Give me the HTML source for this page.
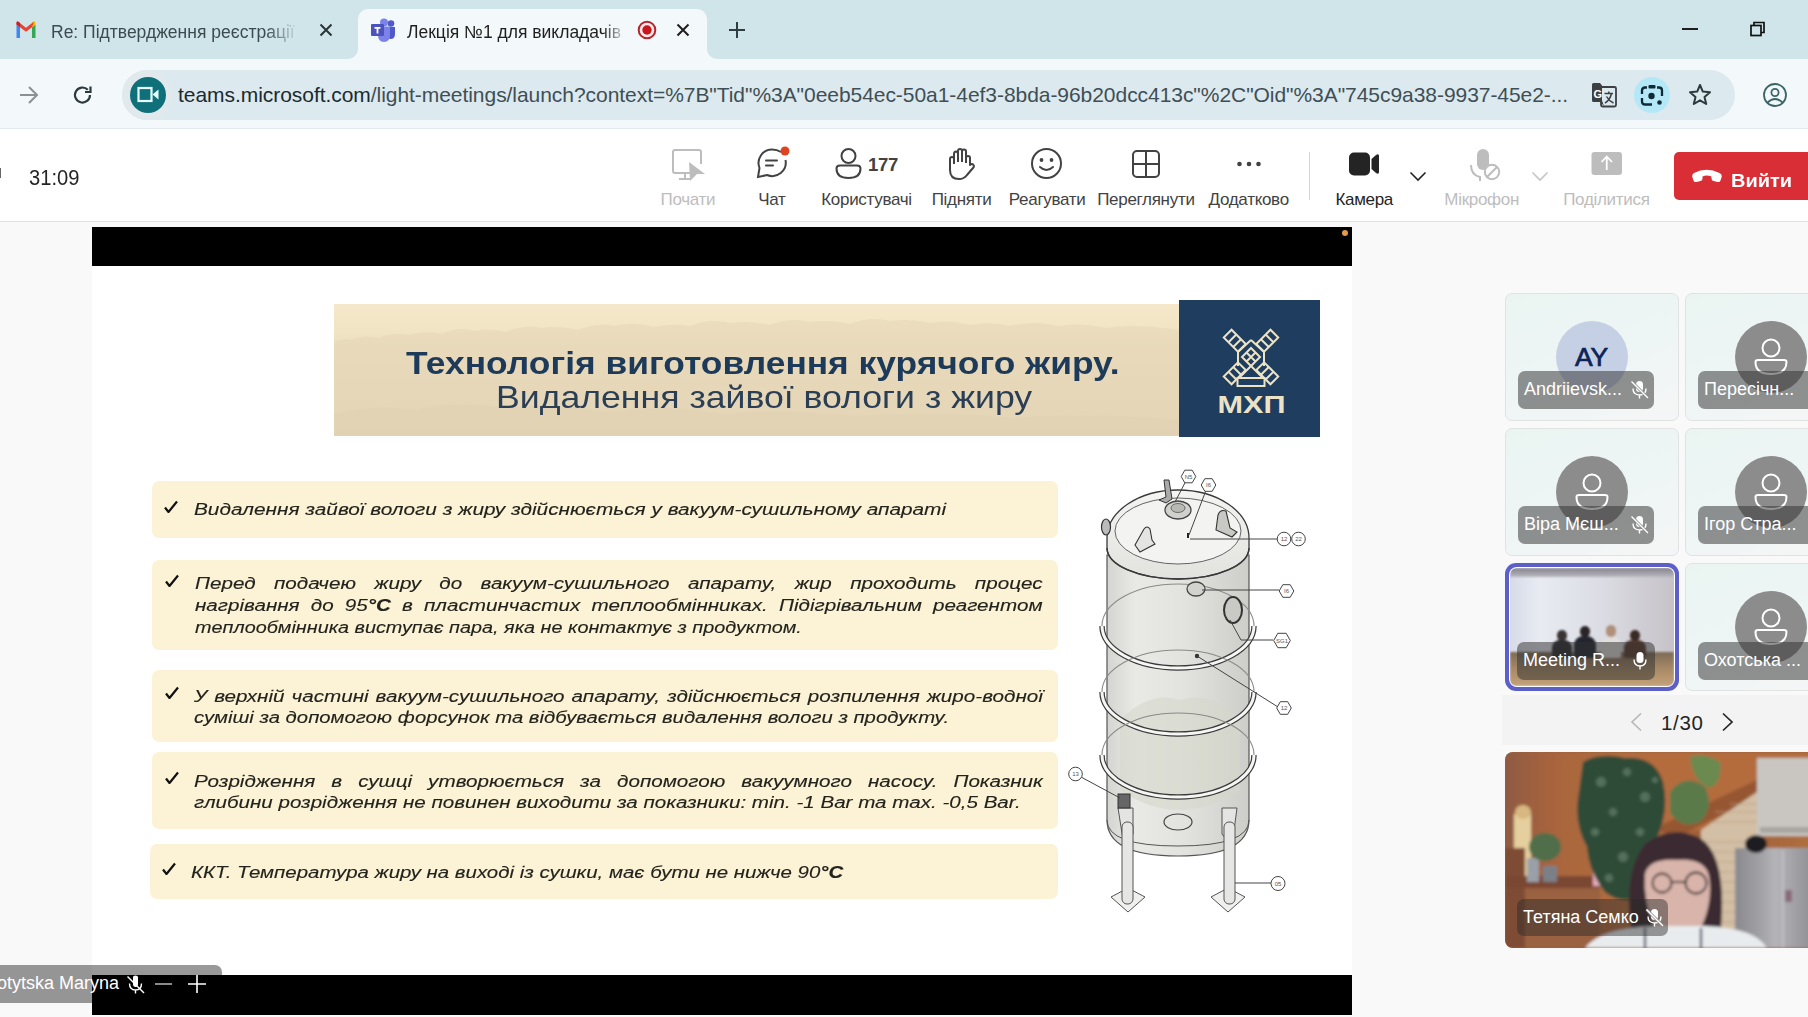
<!DOCTYPE html>
<html><head><meta charset="utf-8">
<style>
*{margin:0;padding:0;box-sizing:border-box}
html,body{width:1808px;height:1017px;overflow:hidden;background:#f9f9f9;font-family:"Liberation Sans",sans-serif}
.a{position:absolute}
.nw{white-space:nowrap}
</style></head><body>
<!-- ========== TAB STRIP ========== -->
<div class="a" style="left:0;top:0;width:1808px;height:59px;background:#d0e5ea"></div>
<!-- gmail icon -->
<svg class="a" style="left:15px;top:21px" width="22" height="17" viewBox="0 0 22 17">
  <path d="M1.5 17 V3.5 L5 6.2 V17 Z" fill="#4285f4"/>
  <path d="M17 17 V6.2 L20.5 3.5 V17 Z" fill="#34a853"/>
  <path d="M17 6.2 L17 1.5 L19 0.6 Q20.5 0 20.5 2 V3.5 Z" fill="#fbbc04"/>
  <path d="M1.5 3.5 V2 Q1.5 0 3 0.6 L11 6.8 L19 0.6 L17 6.2 L11 10.8 L5 6.2 Z" fill="#ea4335"/>
  <path d="M1.5 3.5 V2 Q1.5 0 3 0.6 L5 2.1 V6.2 Z" fill="#c5221f"/>
</svg>
<div class="a nw" style="left:51px;top:22px;width:250px;overflow:hidden;font-size:17.5px;color:#3b4b50;-webkit-mask-image:linear-gradient(90deg,#000 215px,transparent 248px)">Re: Підтвердження реєстрації</div>
<svg class="a" style="left:319px;top:23px" width="14" height="14" viewBox="0 0 14 14"><path d="M1.5 1.5 L12.5 12.5 M12.5 1.5 L1.5 12.5" stroke="#2a3438" stroke-width="2"/></svg>
<!-- active tab -->
<div class="a" style="left:358px;top:9px;width:349px;height:51px;background:#f3f8fb;border-radius:10px 10px 0 0"></div>
<div class="a" style="left:348px;top:49px;width:10px;height:10px;background:#f3f8fb"></div>
<div class="a" style="left:338px;top:39px;width:20px;height:20px;background:#d0e5ea;border-radius:0 0 10px 0"></div>
<div class="a" style="left:707px;top:49px;width:10px;height:10px;background:#f3f8fb"></div>
<div class="a" style="left:707px;top:39px;width:20px;height:20px;background:#d0e5ea;border-radius:0 0 0 10px"></div>
<!-- teams icon -->
<svg class="a" style="left:370px;top:18px" width="26" height="24" viewBox="0 0 26 24">
  <circle cx="21" cy="5.5" r="3.3" fill="#5059c9"/>
  <path d="M17 9 H25 V16 Q25 21 20.5 21 Q17 21 17 17 Z" fill="#5059c9"/>
  <circle cx="14" cy="4.5" r="4" fill="#7b83eb"/>
  <path d="M8 8.5 H20 V17 Q20 24 14 24 Q8 24 8 17 Z" fill="#7b83eb"/>
  <rect x="1" y="6" width="13" height="12" rx="1" fill="#4b53bc"/>
  <path d="M4.5 9 H10.5 V10.8 H8.4 V15.5 H6.6 V10.8 H4.5 Z" fill="#fff"/>
</svg>
<div class="a nw" style="left:407px;top:22px;width:220px;overflow:hidden;font-size:17.5px;color:#1f1f1f;-webkit-mask-image:linear-gradient(90deg,#000 196px,transparent 220px)">Лекція №1 для викладачів</div>
<svg class="a" style="left:637px;top:20px" width="20" height="20" viewBox="0 0 20 20"><circle cx="10" cy="10" r="8.3" fill="#fde9e9" stroke="#b3262d" stroke-width="2"/><circle cx="10" cy="10" r="4.7" fill="#c8161d"/></svg>
<svg class="a" style="left:676px;top:23px" width="14" height="14" viewBox="0 0 14 14"><path d="M1.5 1.5 L12.5 12.5 M12.5 1.5 L1.5 12.5" stroke="#1f1f1f" stroke-width="2"/></svg>
<!-- plus -->
<svg class="a" style="left:729px;top:22px" width="16" height="16" viewBox="0 0 16 16"><path d="M8 0 V16 M0 8 H16" stroke="#2f3d42" stroke-width="2"/></svg>
<!-- window controls -->
<div class="a" style="left:1682px;top:28px;width:16px;height:1.5px;background:#1f1f1f"></div>
<svg class="a" style="left:1750px;top:21px" width="16" height="16" viewBox="0 0 16 16"><rect x="1" y="4.5" width="10" height="10" fill="none" stroke="#111" stroke-width="1.7"/><path d="M4 4.5 V1.5 H14 V11.5 H11" fill="none" stroke="#111" stroke-width="1.7"/></svg>

<!-- ========== BROWSER TOOLBAR ========== -->
<div class="a" style="left:0;top:59px;width:1808px;height:70px;background:#f3f8fb"></div>
<div class="a" style="left:0;top:128px;width:1808px;height:1px;background:#e2e9ec"></div>
<svg class="a" style="left:18px;top:85px" width="22" height="20" viewBox="0 0 22 20"><path d="M2 10 H19 M11 2 L19 10 L11 18" fill="none" stroke="#8a9194" stroke-width="2"/></svg>
<svg class="a" style="left:72px;top:84px" width="22" height="22" viewBox="0 0 22 22"><path d="M18 11 A7.5 7.5 0 1 1 15.8 5.7" fill="none" stroke="#2c3a3e" stroke-width="2.2"/><path d="M18.5 2.5 V8 H13" fill="none" stroke="#2c3a3e" stroke-width="2.2"/></svg>
<!-- omnibox -->
<div class="a" style="left:122px;top:70px;width:1613px;height:50px;border-radius:25px;background:#dce9ee"></div>
<div class="a" style="left:122px;top:70px;width:50px;height:50px;border-radius:25px;background:#e1e9ec"></div>
<div class="a" style="left:130px;top:77px;width:36px;height:36px;border-radius:18px;background:#10707a"></div>
<svg class="a" style="left:137px;top:85px" width="24" height="20" viewBox="0 0 24 20"><rect x="1.5" y="3" width="13" height="13" fill="none" stroke="#e6fbff" stroke-width="2.2"/><path d="M15.5 9.5 L21.5 4.5 V14.5 Z" fill="#e6fbff"/></svg>
<div class="a nw" style="left:178px;top:83px;font-size:21px;letter-spacing:-0.05px;color:#1b2a30">teams.microsoft.com<span style="color:#3f4f55">/light-meetings/launch?context=%7B"Tid"%3A"0eeb54ec-50a1-4ef3-8bda-96b20dcc413c"%2C"Oid"%3A"745c9a38-9937-45e2-...</span></div>
<!-- translate icon -->
<svg class="a" style="left:1590px;top:81px" width="30" height="28" viewBox="0 0 30 28">
  <rect x="11" y="6" width="15" height="19.5" rx="1.5" fill="#dce9ee" stroke="#3c4043" stroke-width="1.8"/>
  <path d="M3.5 2 H10 L12 4.5 V19.5 L14 25 L10 21 H3.5 Q2 21 2 19.5 V3.5 Q2 2 3.5 2 Z" fill="#3c4043"/>
  <text x="3.6" y="16.5" font-size="11" font-weight="700" font-family="Liberation Sans" fill="#fff">G</text>
  <path d="M14.5 12.5 H23 M18.8 10.5 V12.5 M21.5 12.5 Q20 19 15 22 M16.5 15.5 Q19 20 23.5 22" fill="none" stroke="#3c4043" stroke-width="1.5"/>
</svg>
<!-- lens -->
<div class="a" style="left:1634px;top:77px;width:36px;height:36px;border-radius:18px;background:#b5e8f7"></div>
<svg class="a" style="left:1640px;top:83px" width="24" height="24" viewBox="0 0 24 24">
  <path d="M7 4.5 H5 Q2 4.5 2 7.5 V11 M2 15 V18.5 Q2 21.5 5 21.5 H12 M22 13 V7.5 Q22 4.5 19 4.5 H17" fill="none" stroke="#0f2a35" stroke-width="2.3"/>
  <rect x="8.5" y="2" width="7" height="3.5" rx="1" fill="#0f2a35"/>
  <circle cx="11.5" cy="13" r="3.2" fill="#0f2a35"/>
  <circle cx="19.5" cy="19.5" r="2.3" fill="#0f2a35"/>
</svg>
<!-- star -->
<svg class="a" style="left:1688px;top:83px" width="24" height="23" viewBox="0 0 24 23"><path d="M12 2 L14.8 8.6 L22 9.2 L16.5 13.9 L18.2 21 L12 17.3 L5.8 21 L7.5 13.9 L2 9.2 L9.2 8.6 Z" fill="none" stroke="#2c3a3e" stroke-width="2" stroke-linejoin="round"/></svg>
<!-- profile -->
<svg class="a" style="left:1761px;top:81px" width="28" height="28" viewBox="0 0 28 28"><circle cx="14" cy="14" r="11" fill="none" stroke="#3a6668" stroke-width="1.8"/><circle cx="14" cy="11.5" r="3.6" fill="none" stroke="#3a6668" stroke-width="1.8"/><path d="M6.5 21.5 Q14 14.5 21.5 21.5" fill="none" stroke="#3a6668" stroke-width="1.8"/></svg>
<!-- ========== TEAMS TOOLBAR ========== -->
<div class="a" style="left:0;top:129px;width:1808px;height:92px;background:#fff"></div>
<div class="a" style="left:0;top:221px;width:1808px;height:1px;background:#e1e1e1"></div>
<div class="a" style="left:0;top:168px;width:1px;height:10px;background:#666"></div>
<div class="a nw" style="left:29px;top:165px;font-size:22.5px;color:#242424;transform-origin:0 0;transform:scaleX(0.895)">31:09</div>
<!-- Почати -->
<svg class="a" style="left:671px;top:148px" width="36" height="34" viewBox="0 0 36 34">
 <path d="M23 25 H4 Q2 25 2 23 V4 Q2 2 4 2 H28 Q30 2 30 4 V16" fill="none" stroke="#bdbdbd" stroke-width="2"/>
 <path d="M8 31 H20 M14 25 V31" stroke="#bdbdbd" stroke-width="2"/>
 <path d="M18 14 L34 26 L26 26 L19 33 Z" fill="#bdbdbd"/>
</svg>
<div class="a nw lbl" style="left:617.9px;top:190px;width:140px;text-align:center;color:#bdbdbd">Почати</div>
<!-- Чат -->
<svg class="a" style="left:755px;top:146px" width="36" height="34" viewBox="0 0 36 34">
 <path d="M26 6 Q22 3.5 17 3.5 A13.5 13.5 0 0 0 4.5 22 L3 31 L12 29 A13.5 13.5 0 0 0 30.5 14" fill="none" stroke="#424242" stroke-width="2"/>
 <path d="M11 14.5 H22 M11 19.5 H18" stroke="#424242" stroke-width="2" stroke-linecap="round"/>
 <circle cx="30" cy="5" r="4.5" fill="#e0441f"/>
</svg>
<div class="a nw lbl" style="left:701.8px;top:190px;width:140px;text-align:center">Чат</div>
<!-- Користувачі -->
<svg class="a" style="left:834px;top:147px" width="30" height="33" viewBox="0 0 30 33">
 <circle cx="14.5" cy="9" r="7" fill="none" stroke="#424242" stroke-width="2"/>
 <path d="M2.5 21.5 Q2.5 18.5 6 18.5 H23 Q26.5 18.5 26.5 21.5 Q26.5 31 14.5 31 Q2.5 31 2.5 21.5 Z" fill="none" stroke="#424242" stroke-width="2"/>
</svg>
<div class="a nw" style="left:868px;top:154px;font-size:18.5px;font-weight:700;color:#424242;letter-spacing:-0.3px">177</div>
<div class="a nw lbl" style="left:796.5px;top:190px;width:140px;text-align:center">Користувачі</div>
<!-- Підняти -->
<svg class="a" style="left:947px;top:147px" width="28" height="34" viewBox="0 0 28 34">
 <path d="M7 17 V7 Q7 4.5 9 4.5 Q11 4.5 11 7 V15 M11 13 V4 Q11 2 13 2 Q15 2 15 4 V15 M15 13 V4.5 Q15 2.5 17 2.5 Q19 2.5 19 4.5 V16 M19 11 Q19 9 21 9 Q23 9 23 11 V18 Q25 16 26.5 18 Q27.5 19.5 26 21 L20 28 Q17 32 12 32 Q3 32 3 23 V12 Q3 10 5 10 Q7 10 7 12" fill="none" stroke="#424242" stroke-width="2" stroke-linejoin="round"/>
</svg>
<div class="a nw lbl" style="left:891.5px;top:190px;width:140px;text-align:center">Підняти</div>
<!-- Реагувати -->
<svg class="a" style="left:1030px;top:147px" width="33" height="33" viewBox="0 0 33 33">
 <circle cx="16.5" cy="16.5" r="14.5" fill="none" stroke="#424242" stroke-width="2"/>
 <circle cx="11.5" cy="13" r="1.9" fill="#424242"/><circle cx="21.5" cy="13" r="1.9" fill="#424242"/>
 <path d="M10 20 Q16.5 26 23 20" fill="none" stroke="#424242" stroke-width="2" stroke-linecap="round"/>
</svg>
<div class="a nw lbl" style="left:977.2px;top:190px;width:140px;text-align:center">Реагувати</div>
<!-- Переглянути -->
<svg class="a" style="left:1131px;top:149px" width="30" height="30" viewBox="0 0 30 30">
 <rect x="2" y="2" width="26" height="26" rx="4" fill="none" stroke="#424242" stroke-width="2"/>
 <path d="M15 2 V28 M2 15 H28" stroke="#424242" stroke-width="2"/>
</svg>
<div class="a nw lbl" style="left:1075.9px;top:190px;width:140px;text-align:center">Переглянути</div>
<!-- Додатково -->
<svg class="a" style="left:1235px;top:159px" width="28" height="10" viewBox="0 0 28 10"><circle cx="4.5" cy="5" r="2.3" fill="#424242"/><circle cx="14" cy="5" r="2.3" fill="#424242"/><circle cx="23.5" cy="5" r="2.3" fill="#424242"/></svg>
<div class="a nw lbl" style="left:1178.7px;top:190px;width:140px;text-align:center">Додатково</div>
<!-- divider -->
<div class="a" style="left:1309px;top:152px;width:1px;height:48px;background:#d6d6d6"></div>
<!-- Камера -->
<svg class="a" style="left:1347px;top:151px" width="34" height="26" viewBox="0 0 34 26">
 <rect x="2" y="1.5" width="21" height="23" rx="5" fill="#242424"/>
 <path d="M24.5 8 L29 4 Q32 2 32 5 V21 Q32 24 29 22 L24.5 18 Z" fill="#242424"/>
</svg>
<div class="a nw lbl" style="left:1294.2px;top:190px;width:140px;text-align:center;color:#242424">Камера</div>
<svg class="a" style="left:1409px;top:171px" width="18" height="11" viewBox="0 0 18 11"><path d="M1.5 1.5 L9 9 L16.5 1.5" fill="none" stroke="#242424" stroke-width="1.6"/></svg>
<!-- Мікрофон -->
<svg class="a" style="left:1467px;top:147px" width="34" height="34" viewBox="0 0 34 34">
 <rect x="10" y="2" width="12" height="21" rx="6" fill="#bdbdbd"/>
 <path d="M4 18 Q4 28 13 30 V34" fill="none" stroke="#bdbdbd" stroke-width="2"/>
 <circle cx="25" cy="25" r="7.2" fill="#fff" stroke="#bdbdbd" stroke-width="2"/>
 <path d="M20 30 L30 20" stroke="#bdbdbd" stroke-width="2"/>
</svg>
<div class="a nw lbl" style="left:1411.7px;top:190px;width:140px;text-align:center;color:#bdbdbd">Мікрофон</div>
<svg class="a" style="left:1531px;top:171px" width="18" height="11" viewBox="0 0 18 11"><path d="M1.5 1.5 L9 9 L16.5 1.5" fill="none" stroke="#c4c4c4" stroke-width="1.6"/></svg>
<!-- Поділитися -->
<svg class="a" style="left:1591px;top:151px" width="32" height="25" viewBox="0 0 32 25">
 <rect x="0.5" y="1" width="30.5" height="23" rx="3" fill="#bdbdbd"/>
 <path d="M15.75 19 V6 M10.5 11 L15.75 5.5 L21 11" fill="none" stroke="#fff" stroke-width="1.8"/>
</svg>
<div class="a nw lbl" style="left:1536.4px;top:190px;width:140px;text-align:center;color:#bdbdbd">Поділитися</div>
<!-- Вийти -->
<div class="a" style="left:1674px;top:152px;width:140px;height:48px;border-radius:5px;background:#d92e35"></div>
<svg class="a" style="left:1690px;top:168px" width="34" height="16" viewBox="0 0 34 16">
 <path d="M2.5 9.5 Q1.5 6.5 4 5 Q16.5 -1.5 29.5 5 Q32.5 6.5 31.5 9.5 L30.5 12.5 Q30 14.5 27.5 14 L23.5 13 Q21.5 12.5 21.5 10.5 V8.5 Q16.5 6.5 12.5 8.5 V10.5 Q12.5 12.5 10.5 13 L6.5 14 Q4 14.5 3.5 12.5 Z" fill="#fff"/>
</svg>
<div class="a nw" style="left:1731px;top:170px;font-size:18.5px;font-weight:700;color:#fff;transform-origin:0 0;transform:scaleX(1.08)">Вийти</div>
<!-- ========== SLIDE ========== -->
<div class="a" style="left:92px;top:227px;width:1260px;height:39px;background:#000"></div>
<div class="a" style="left:1342px;top:230px;width:6px;height:6px;border-radius:3px;background:#e49a4a"></div>
<div class="a" style="left:92px;top:266px;width:1260px;height:709px;background:#fff"></div>
<div class="a" style="left:92px;top:975px;width:1260px;height:40px;background:#000"></div>
<!-- banner -->
<div class="a" style="left:334px;top:304px;width:845px;height:132px;background:linear-gradient(180deg,#f5e8ca 0%,#f2e5c6 18%,#ebdebf 34%,#e7dabb 60%,#e3d6b6 100%)"></div>
<svg class="a" style="left:334px;top:304px" width="845" height="132" viewBox="0 0 845 132">
 <path d="M0 38 Q8 34 16 36 Q30 30 44 34 Q60 28 76 31 Q92 26 108 30 Q124 22 140 27 Q156 24 172 28 Q190 20 208 24 Q226 21 244 26 Q262 18 280 22 Q300 17 320 23 Q338 19 356 22 Q376 14 396 19 Q416 16 436 21 Q456 13 476 18 Q496 15 516 20 Q536 12 556 17 Q576 14 596 19 Q616 15 636 21 Q656 17 676 22 Q700 16 724 22 Q748 18 772 24 Q800 19 845 26 V132 H0 Z" fill="#e4d6b6" opacity="0.55"/>
 <path d="M0 110 Q40 100 80 106 Q120 96 170 104 Q220 98 270 108 Q330 100 390 110 Q450 104 520 112 Q600 106 680 114 Q760 108 845 116 V132 H0 Z" fill="#ddcfae" opacity="0.35"/>
</svg>
<div class="a nw" id="t1" style="left:406px;top:345px;font-size:31.5px;font-weight:700;color:#1d3a5a;transform-origin:0 0;transform:scaleX(1.123)">Технологія виготовлення курячого жиру.</div>
<div class="a nw" id="t2" style="left:496px;top:380px;font-size:30.5px;color:#2a3f56;transform-origin:0 0;transform:scaleX(1.168)">Видалення зайвої вологи з жиру</div>
<!-- logo -->
<div class="a" style="left:1179px;top:300px;width:141px;height:137px;background:#1f3d5e"></div>
<svg class="a" style="left:1179px;top:300px" width="141" height="137" viewBox="0 0 141 137">
 <g fill="none" stroke="#ece3c6" stroke-width="2">
  <g transform="translate(72 57) rotate(-45)">
   <rect x="-5.5" y="-33" width="11" height="20"/><path d="M-5.5 -26.3 H5.5 M-5.5 -19.6 H5.5"/>
   <rect x="-5.5" y="13" width="11" height="20"/><path d="M-5.5 26.3 H5.5 M-5.5 19.6 H5.5"/>
  </g>
  <g transform="translate(72 57) rotate(45)">
   <rect x="-5.5" y="-33" width="11" height="20"/><path d="M-5.5 -26.3 H5.5 M-5.5 -19.6 H5.5"/>
   <rect x="-5.5" y="13" width="11" height="20"/><path d="M-5.5 26.3 H5.5 M-5.5 19.6 H5.5"/>
  </g>
  <path d="M72 40 L59 52 V66 M72 40 L85 52 V66"/>
  <path d="M72 48 L81 57 L72 66 L63 57 Z M67.5 52.5 L76.5 61.5 M76.5 52.5 L67.5 61.5"/>
  <path d="M72 66 L61 77 M72 66 L83 77"/>
  <rect x="58.5" y="78" width="27" height="8"/>
 </g>
 <text x="38.5" y="112.5" font-family="Liberation Sans" font-weight="700" font-size="24.5" fill="#ece3c6" textLength="68" lengthAdjust="spacingAndGlyphs">МХП</text>
</svg>
<!-- bullet boxes -->
<div class="a" style="left:152px;top:481px;width:906px;height:57px;border-radius:7px;background:#fcf3d6"></div>
<div class="a" style="left:152px;top:560px;width:906px;height:90px;border-radius:7px;background:#fcf3d6"></div>
<div class="a" style="left:152px;top:670px;width:906px;height:72px;border-radius:7px;background:#fcf3d6"></div>
<div class="a" style="left:152px;top:752px;width:906px;height:77px;border-radius:7px;background:#fcf3d6"></div>
<div class="a" style="left:150px;top:844px;width:908px;height:55px;border-radius:7px;background:#fcf3d6"></div>
<style>
.ck{position:absolute;width:14px;height:13px}
.bt{position:absolute;font-size:16px;font-style:italic;color:#23231d;-webkit-text-stroke:0.12px #23231d;line-height:22px;transform-origin:0 0;white-space:nowrap}
.bjl{text-align:justify;text-align-last:justify}
.lbl{font-size:17px;letter-spacing:-0.3px;color:#424242}
</style>
<svg class="ck" style="left:164px;top:500px" viewBox="0 0 14 13"><path d="M1 7.5 L4.5 12 L13 1.5" fill="none" stroke="#111" stroke-width="2.2" stroke-linejoin="round"/></svg>
<svg class="ck" style="left:165px;top:574px" viewBox="0 0 14 13"><path d="M1 7.5 L4.5 12 L13 1.5" fill="none" stroke="#111" stroke-width="2.2" stroke-linejoin="round"/></svg>
<svg class="ck" style="left:165px;top:686px" viewBox="0 0 14 13"><path d="M1 7.5 L4.5 12 L13 1.5" fill="none" stroke="#111" stroke-width="2.2" stroke-linejoin="round"/></svg>
<svg class="ck" style="left:165px;top:771px" viewBox="0 0 14 13"><path d="M1 7.5 L4.5 12 L13 1.5" fill="none" stroke="#111" stroke-width="2.2" stroke-linejoin="round"/></svg>
<svg class="ck" style="left:162px;top:862px" viewBox="0 0 14 13"><path d="M1 7.5 L4.5 12 L13 1.5" fill="none" stroke="#111" stroke-width="2.2" stroke-linejoin="round"/></svg>
<div class="bt" style="left:194px;top:499px;transform:scaleX(1.2997)">Видалення зайвої вологи з жиру здійснюється у вакуум-сушильному апараті</div>
<div class="bt bjl" style="left:195px;top:573px;width:657px;transform:scaleX(1.29)">Перед подачею жиру до вакуум-сушильного апарату, жир проходить процес</div>
<div class="bt bjl" style="left:195px;top:595px;width:657px;transform:scaleX(1.29)">нагрівання до 95<b>°C</b> в пластинчастих теплообмінниках. Підігрівальним реагентом</div>
<div class="bt" style="left:195px;top:617px;transform:scaleX(1.239)">теплообмінника виступає пара, яка не контактує з продуктом.</div>
<div class="bt bjl" style="left:194px;top:686px;width:658px;transform:scaleX(1.29)">У верхній частині вакуум-сушильного апарату, здійснюється розпилення жиро-водної</div>
<div class="bt" style="left:194px;top:707px;transform:scaleX(1.2685)">суміші за допомогою форсунок та відбувається видалення вологи з продукту.</div>
<div class="bt bjl" style="left:194px;top:771px;width:658px;transform:scaleX(1.29)">Розрідження в сушці утворюється за допомогою вакуумного насосу. Показник</div>
<div class="bt" style="left:194px;top:792px;transform:scaleX(1.2857)">глибини розрідження не повинен виходити за показники: min. -1 Bar та max. -0,5 Bar.</div>
<div class="bt" style="left:191px;top:862px;transform:scaleX(1.277)">ККТ. Температура жиру на виході із сушки, має бути не нижче 90<b>°C</b></div>
<!-- ========== TANK ========== -->
<svg class="a" style="left:1060px;top:460px" width="260" height="470" viewBox="1060 460 260 470">
 <defs>
  <linearGradient id="cyl" x1="0" x2="1" y1="0" y2="0">
   <stop offset="0" stop-color="#d4d4d0"/><stop offset="0.2" stop-color="#e9e9e6"/><stop offset="0.55" stop-color="#e2e2de"/><stop offset="1" stop-color="#cdcdc9"/>
  </linearGradient>
  <linearGradient id="dome" x1="0" x2="0" y1="0" y2="1">
   <stop offset="0" stop-color="#f4f4f2"/><stop offset="1" stop-color="#e2e2de"/>
  </linearGradient>
 </defs>
 <!-- legs back -->
 <path d="M1111 897 L1128 888 L1145 897 L1128 912 Z" fill="#f0f0ee" stroke="#555" stroke-width="1"/>
 <path d="M1211 897 L1228 888 L1245 897 L1228 912 Z" fill="#f0f0ee" stroke="#555" stroke-width="1"/>
 <!-- body -->
 <path d="M1107 555 V820 Q1107 856 1178 856 Q1249 856 1249 820 V555 Z" fill="url(#cyl)" stroke="#555" stroke-width="1.2"/>
 <path d="M1120 720 Q1150 690 1180 700 Q1210 690 1240 720 V790 Q1178 830 1120 790 Z" fill="#d6d8cc" opacity="0.6"/>
 <!-- rings -->
 <path d="M1102 626 A76 42 0 0 1 1254 626" fill="none" stroke="#8a8a88" stroke-width="1.1"/>
 <path d="M1102 626 A76 42 0 0 0 1254 626" fill="none" stroke="#3a3a3a" stroke-width="5.4"/>
 <path d="M1102 626 A76 42 0 0 0 1254 626" fill="none" stroke="#f6f6f4" stroke-width="3"/>
 <path d="M1102 692 A76 42 0 0 1 1254 692" fill="none" stroke="#8a8a88" stroke-width="1.1"/>
 <path d="M1102 692 A76 42 0 0 0 1254 692" fill="none" stroke="#3a3a3a" stroke-width="5.4"/>
 <path d="M1102 692 A76 42 0 0 0 1254 692" fill="none" stroke="#f6f6f4" stroke-width="3"/>
 <path d="M1102 755 A76 42 0 0 1 1254 755" fill="none" stroke="#8a8a88" stroke-width="1.1"/>
 <path d="M1102 755 A76 42 0 0 0 1254 755" fill="none" stroke="#3a3a3a" stroke-width="5.4"/>
 <path d="M1102 755 A76 42 0 0 0 1254 755" fill="none" stroke="#f6f6f4" stroke-width="3"/>
<!-- bottom rim -->
 <path d="M1107 820 Q1107 846 1178 846 Q1249 846 1249 820" fill="none" stroke="#555" stroke-width="1"/>
 <!-- dome -->
 <path d="M1107 538 A71 48 0 0 1 1249 538 V548 A71 31 0 0 1 1107 548 Z" fill="url(#dome)" stroke="#3a3a3a" stroke-width="1.3"/>
 <ellipse cx="1178" cy="531" rx="63" ry="33" fill="#f3f3f1" stroke="#555" stroke-width="0.9"/>
 <path d="M1107 548 A71 31 0 0 0 1249 548" fill="none" stroke="#3a3a3a" stroke-width="1.5"/>
 <ellipse cx="1178" cy="510" rx="13" ry="9" fill="#d0d0cc" stroke="#444" stroke-width="1.3"/>
 <ellipse cx="1178" cy="508" rx="7" ry="4.5" fill="#b8b8b4" stroke="#555" stroke-width="0.8"/>
 <path d="M1164 480 L1166 497 L1159 500 L1166 503 L1172 499 L1169 480 Z" fill="#aaa" stroke="#333" stroke-width="1"/>
 <path d="M1135 545 L1144 529 Q1147 525 1150 529 L1152 540 L1155 544 L1140 552 Z" fill="#e4e4e2" stroke="#333" stroke-width="1.1"/>
 <path d="M1218 515 Q1220 509 1226 511 L1230 528 L1237 532 L1232 537 L1216 530 Z" fill="#c8c8c4" stroke="#333" stroke-width="1.1"/>
 <path d="M1188 533 V538" stroke="#222" stroke-width="2"/>
 <ellipse cx="1106" cy="527" rx="4.5" ry="8" fill="#bbb" stroke="#333" stroke-width="1.2"/>
<!-- side flanges -->
 <ellipse cx="1196" cy="589" rx="9" ry="7" fill="#d2d2ce" stroke="#444" stroke-width="1.3"/>
 <ellipse cx="1233" cy="610" rx="9" ry="13" fill="#c9c9c5" stroke="#333" stroke-width="2"/>
 <circle cx="1197" cy="656" r="2.2" fill="#333"/>
 <!-- legs front -->
 <path d="M1118 808 H1133 V834 L1124 846 Z" fill="#e4e4e2" stroke="#555" stroke-width="1"/>
 <path d="M1222 808 H1237 L1232 846 L1222 834 Z" fill="#e4e4e2" stroke="#555" stroke-width="1"/>
 <rect x="1122" y="822" width="11" height="82" rx="5" fill="#e6e6e4" stroke="#555" stroke-width="1"/>
 <rect x="1224" y="822" width="11" height="82" rx="5" fill="#e6e6e4" stroke="#555" stroke-width="1"/>
<ellipse cx="1178" cy="822" rx="14" ry="8" fill="none" stroke="#444" stroke-width="1.2"/>
 <rect x="1118" y="794" width="12" height="14" fill="#666" stroke="#333" stroke-width="1"/>
 <!-- callouts -->
 <g fill="#fff" stroke="#444" stroke-width="1" font-family="Liberation Sans" font-size="6">
  <path d="M1175 502 L1188 477 M1189 535 L1208 485 M1190 539 H1277 M1202 590 H1279 M1230 620 L1241 640 H1273 M1197 656 L1278 707 M1120 798 L1081 777 M1235 883 H1271" fill="none"/>
  <polygon points="1195.8,476.5 1192.2,482.8 1184.8,482.8 1181.2,476.5 1184.8,470.2 1192.2,470.2"/><polygon points="1215.8,485.0 1212.2,491.3 1204.8,491.3 1201.2,485.0 1204.8,478.7 1212.2,478.7"/>
  <circle cx="1284" cy="539" r="6.8"/><circle cx="1298.5" cy="539" r="6.8"/>
  <polygon points="1293.8,591.0 1290.2,597.3 1282.8,597.3 1279.2,591.0 1282.8,584.7 1290.2,584.7"/><polygon points="1290.3,640.5 1286.2,647.7 1277.8,647.7 1273.7,640.5 1277.8,633.3 1286.2,633.3"/>
  <polygon points="1291.3,708.0 1287.7,714.3 1280.3,714.3 1276.7,708.0 1280.3,701.7 1287.7,701.7"/><circle cx="1075.5" cy="774" r="6.8"/><circle cx="1278" cy="883.5" r="7"/>
 </g>
 <g font-family="Liberation Sans" font-size="6" fill="#555" text-anchor="middle">
  <text x="1188.5" y="478.5">N5</text><text x="1208.5" y="487">I6</text><text x="1284" y="541">12</text><text x="1298.5" y="541">22</text>
  <text x="1286.5" y="593">I6</text><text x="1282" y="642.5">SG1</text><text x="1284" y="710">12</text><text x="1075.5" y="776">13</text><text x="1278" y="885.5">05</text>
 </g>
</svg>
<!-- ========== RIGHT PANEL ========== -->
<style>
.tile{position:absolute;width:174px;height:128px;border:1px solid #e0e3e2;border-radius:7px;background:linear-gradient(160deg,#eaf5f2 0%,#eef5f5 50%,#f5f5f6 100%)}
.av{position:absolute;width:72px;height:72px;border-radius:36px;background:#8c8c8c}
.nm{position:absolute;height:38px;border-radius:7px;background:rgba(50,50,50,0.52)}
.nt{position:absolute;font-size:18px;color:#fff;white-space:nowrap}
</style>
<div class="tile" style="left:1505px;top:293px"></div>
<div class="tile" style="left:1685px;top:293px;width:140px"></div>
<div class="tile" style="left:1505px;top:428px"></div>
<div class="tile" style="left:1685px;top:428px;width:140px"></div>
<div class="tile" style="left:1685px;top:563px;width:140px"></div>
<!-- avatars -->
<div class="av" style="left:1556px;top:321px;background:#c5d0e5"></div>
<div class="a nw" style="left:1575px;top:342px;font-size:26.5px;font-weight:400;color:#0c2457;-webkit-text-stroke:0.7px #0c2457;letter-spacing:-0.3px">AY</div>
<svg width="0" height="0" style="position:absolute"><defs><g id="person"><circle cx="0" cy="-9" r="8.5" fill="none" stroke="#fff" stroke-width="2"/><path d="M-15.5 5 Q-15.5 3 -13 3 H13 Q15.5 3 15.5 5 Q15.5 17 0 17 Q-15.5 17 -15.5 5 Z" fill="none" stroke="#fff" stroke-width="2"/></g></defs></svg>
<div class="av" style="left:1735px;top:321px"></div>
<svg class="a" style="left:1735px;top:321px" width="72" height="72"><use href="#person" x="36" y="36"/></svg>
<div class="av" style="left:1556px;top:456px"></div>
<svg class="a" style="left:1556px;top:456px" width="72" height="72"><use href="#person" x="36" y="36"/></svg>
<div class="av" style="left:1735px;top:456px"></div>
<svg class="a" style="left:1735px;top:456px" width="72" height="72"><use href="#person" x="36" y="36"/></svg>
<div class="av" style="left:1735px;top:591px"></div>
<svg class="a" style="left:1735px;top:591px" width="72" height="72"><use href="#person" x="36" y="36"/></svg>
<!-- name labels -->
<svg width="0" height="0" style="position:absolute"><defs>
 <g id="micoff"><rect x="6" y="1" width="7" height="11" rx="3.5" fill="#fff"/><path d="M3 8.5 Q3 15 9.5 15 Q16 15 16 8.5 M9.5 15 V18.5" fill="none" stroke="#fff" stroke-width="1.4"/><path d="M1.5 1.5 L18 18" stroke="#8a8a8a" stroke-width="3"/><path d="M1.5 1.5 L18 18" stroke="#fff" stroke-width="1.4"/></g>
</defs></svg>
<div class="nm" style="left:1518px;top:371px;width:136px"></div>
<div class="nt" style="left:1524px;top:379px">Andriievsk...</div>
<svg class="a" style="left:1630px;top:380px" width="20" height="20"><use href="#micoff"/></svg>
<div class="nm" style="left:1698px;top:371px;width:120px"></div>
<div class="nt" style="left:1704px;top:379px">Пересічн...</div>
<div class="nm" style="left:1518px;top:506px;width:136px"></div>
<div class="nt" style="left:1524px;top:514px">Віра Мєш...</div>
<svg class="a" style="left:1630px;top:515px" width="20" height="20"><use href="#micoff"/></svg>
<div class="nm" style="left:1698px;top:506px;width:120px"></div>
<div class="nt" style="left:1704px;top:514px">Ігор Стра...</div>
<!-- meeting room tile -->
<div class="a" style="left:1505px;top:563px;width:174px;height:128px;border-radius:11px;background:#5b5fc7"></div>
<div class="a" style="left:1509px;top:567px;width:166px;height:120px;border-radius:8px;background:#fff"></div>
<div class="a" style="left:1510px;top:568px;width:164px;height:118px;border-radius:7px;overflow:hidden;background:linear-gradient(90deg,#d6dbe6 0%,#e8ebf2 18%,#dcdde4 55%,#c6c2c8 100%)">
 <div class="a" style="left:0;top:0;width:164px;height:118px;filter:blur(0.8px)">
 <div class="a" style="left:0;top:0;width:164px;height:9px;background:linear-gradient(180deg,#85828a,#b9b9c2)"></div>
 <div class="a" style="left:0;top:84px;width:164px;height:34px;background:linear-gradient(180deg,#7d6a56,#a88a66 50%,#c4a27a)"></div>
 <div class="a" style="left:42px;top:72px;width:20px;height:18px;border-radius:8px 8px 2px 2px;background:#2a2a30"></div>
 <div class="a" style="left:47px;top:62px;width:10px;height:11px;border-radius:5px;background:#3a3434"></div>
 <div class="a" style="left:64px;top:68px;width:22px;height:22px;border-radius:9px 9px 2px 2px;background:#22252e"></div>
 <div class="a" style="left:70px;top:58px;width:10px;height:11px;border-radius:5px;background:#2a2426"></div>
 <div class="a" style="left:91px;top:69px;width:20px;height:21px;border-radius:8px 8px 2px 2px;background:#e2dedb"></div>
 <div class="a" style="left:96px;top:57px;width:10px;height:12px;border-radius:5px;background:#b0907a"></div>
 <div class="a" style="left:114px;top:72px;width:22px;height:18px;border-radius:8px 8px 2px 2px;background:#5a3a2c"></div>
 <div class="a" style="left:120px;top:62px;width:10px;height:11px;border-radius:5px;background:#3a2a26"></div>
 </div>
</div>
<div class="nm" style="left:1517px;top:642px;width:138px"></div>
<div class="nt" style="left:1523px;top:650px">Meeting R...</div>
<svg class="a" style="left:1632px;top:651px" width="16" height="20" viewBox="0 0 16 20"><rect x="4.5" y="1" width="7" height="11" rx="3.5" fill="#fff"/><path d="M2 8.5 Q2 15 8 15 Q14 15 14 8.5 M8 15 V18.5" fill="none" stroke="#fff" stroke-width="1.4"/></svg>
<div class="nm" style="left:1698px;top:642px;width:120px"></div>
<div class="nt" style="left:1704px;top:650px">Охотська ...</div>
<!-- pagination -->
<div class="a" style="left:1502px;top:695px;width:306px;height:50px;background:#f3f3f3"></div>
<svg class="a" style="left:1628px;top:712px" width="16" height="20" viewBox="0 0 16 20"><path d="M13 1.5 L4 10 L13 18.5" fill="none" stroke="#b8b8b8" stroke-width="1.7"/></svg>
<div class="a nw" style="left:1661px;top:711px;font-size:20.5px;letter-spacing:0.7px;color:#242424">1/30</div>
<svg class="a" style="left:1720px;top:712px" width="16" height="20" viewBox="0 0 16 20"><path d="M3 1.5 L12 10 L3 18.5" fill="none" stroke="#242424" stroke-width="1.7"/></svg>
<!-- video tile -->
<div class="a" style="left:1505px;top:752px;width:310px;height:196px;border-radius:8px;overflow:hidden;background:#9a6238">
<svg class="a" style="left:0;top:0" width="310" height="196" viewBox="0 0 310 196">
 <defs>
  <filter id="vb" x="-5%" y="-5%" width="110%" height="110%"><feGaussianBlur stdDeviation="1.8"/></filter>
  <linearGradient id="wood" x1="0" x2="1"><stop offset="0" stop-color="#8e5a44"/><stop offset="0.15" stop-color="#a8643c"/><stop offset="0.4" stop-color="#b26e40"/><stop offset="0.7" stop-color="#9c5c36"/><stop offset="1" stop-color="#b0703e"/></linearGradient>
  <linearGradient id="fr" x1="0" x2="1"><stop offset="0" stop-color="#8a8a8e"/><stop offset="0.35" stop-color="#a4a4a8"/><stop offset="0.5" stop-color="#b4b4b8"/><stop offset="1" stop-color="#8e8e92"/></linearGradient>
 </defs>
 <g filter="url(#vb)">
  <rect x="0" y="0" width="310" height="196" fill="url(#wood)"/>
  <!-- stairs top -->
  <path d="M135 0 H310 V18 L205 78 H135 Z" fill="#b46c3c"/>
  <path d="M150 76 L290 10 L300 22 L170 86 Z" fill="#8a4e2c" opacity="0.7"/>
  <!-- grey wall top right -->
  <path d="M252 6 H310 V84 H250 L252 40 Z" fill="#c9c6c2"/>
  <rect x="255" y="75" width="55" height="6" fill="#a8a4a0"/>
  <!-- brick wall -->
  <path d="M196 78 L252 40 V196 H196 Z" fill="#d3bfa5"/>
  <g stroke="#b8a088" stroke-width="0.8">
   <path d="M196 90 H252 M196 100 H252 M196 110 H252 M196 120 H252 M196 130 H252 M196 140 H252 M196 150 H252 M196 160 H252 M196 170 H252 M210 60 H252 M225 52 H252 M205 70 H252"/>
  </g>
  <!-- fridge -->
  <rect x="230" y="96" width="80" height="100" fill="url(#fr)"/>
  <path d="M278 98 V196" stroke="#c8c8cc" stroke-width="1.5"/>
  <rect x="280" y="138" width="7" height="12" fill="#8a6a7a"/>
  <ellipse cx="251" cy="92" rx="11" ry="9" fill="#1f1f24"/>
  <!-- left banister -->
  <rect x="9" y="62" width="17" height="64" fill="#e6cf9e"/>
  <ellipse cx="18" cy="60" rx="8" ry="7" fill="#d8b880"/>
  <rect x="0" y="96" width="20" height="100" fill="#7e4c34"/>
  <path d="M0 124 L95 124 V136 L0 136 Z" fill="#7a4630"/>
  <rect x="20" y="136" width="75" height="60" fill="#9a6240"/>
  <rect x="22" y="106" width="12" height="24" fill="#9aa0a8"/>
  <ellipse cx="40" cy="95" rx="16" ry="14" fill="#4f6e48"/>
  <rect x="38" y="114" width="14" height="16" fill="#7a8088"/>
  <!-- pink note -->
  <rect x="88" y="112" width="7" height="22" fill="#e6a9b8"/>
  <!-- big plant -->
  <path d="M78 10 Q95 0 120 6 Q150 4 158 30 Q165 60 150 90 Q148 120 132 146 Q115 152 100 140 Q84 120 82 95 Q68 70 74 40 Z" fill="#2f4b37"/>
  <g fill="#5d7a66" opacity="0.8">
   <circle cx="96" cy="30" r="5"/><circle cx="122" cy="20" r="4"/><circle cx="140" cy="45" r="5"/><circle cx="108" cy="60" r="4"/><circle cx="90" cy="80" r="4"/><circle cx="135" cy="80" r="4"/><circle cx="118" cy="105" r="5"/><circle cx="104" cy="126" r="4"/><circle cx="150" cy="28" r="3"/>
  </g>
  <!-- plants on stairs -->
  <path d="M165 40 Q180 20 200 35 Q210 55 195 70 Q175 78 165 60 Z" fill="#5a7a48"/>
  <path d="M185 5 Q200 0 215 10 Q218 30 205 36 Q188 30 185 5 Z" fill="#6a8a50"/>
  <!-- woman -->
  <path d="M126 176 Q118 120 140 92 Q165 72 195 86 Q222 104 216 176 Z" fill="#3a2a30"/>
  <path d="M140 122 Q144 106 172 108 Q200 106 204 124 Q208 150 196 176 H150 Q138 150 140 122 Z" fill="#d8b4aa"/>
  <circle cx="157" cy="131" r="9.5" fill="none" stroke="#2a1f24" stroke-width="1.8"/>
  <circle cx="191" cy="131" r="10.5" fill="none" stroke="#2a1f24" stroke-width="1.8"/>
  <path d="M166 130 H181" stroke="#2a1f24" stroke-width="1.8"/>
  <path d="M80 196 Q95 176 150 174 H200 Q250 176 262 196 Z" fill="#e8ecee"/>
  <path d="M140 176 V196 M196 176 V196" stroke="#1e2a58" stroke-width="2.2"/>
 </g>
</svg>
</div>
<div class="nm" style="left:1517px;top:899px;width:151px;height:37px;background:rgba(40,40,40,0.45)"></div>
<div class="nt" style="left:1523px;top:907px">Тетяна Семко</div>
<svg class="a" style="left:1645px;top:908px" width="20" height="20"><use href="#micoff"/></svg>
<!-- ========== BOTTOM OVERLAY ========== -->
<div class="a" style="left:-10px;top:965px;width:232px;height:38px;border-radius:7px;background:rgba(0,0,0,0.4)"></div>
<div class="a nw" style="left:-3px;top:973px;font-size:18px;color:#fff">otytska Maryna</div>
<svg class="a" style="left:126px;top:975px" width="20" height="20"><path d="M7 2 Q7 0.5 9.5 0.5 Q12 0.5 12 2 V9 Q12 12 9.5 12 Q7 12 7 9 Z" fill="#fff"/><path d="M3.5 8.5 Q3.5 15 9.5 15 Q15.5 15 15.5 8.5 M9.5 15 V18.5" fill="none" stroke="#fff" stroke-width="1.4"/><path d="M1.5 1.5 L18 18" stroke="#fff" stroke-width="1.4"/></svg>
<div class="a" style="left:155px;top:983px;width:17px;height:1.5px;background:#8a8a8a"></div>
<svg class="a" style="left:188px;top:975px" width="18" height="18"><path d="M9 0 V18 M0 9 H18" stroke="#fff" stroke-width="1.6"/></svg>
</body></html>
